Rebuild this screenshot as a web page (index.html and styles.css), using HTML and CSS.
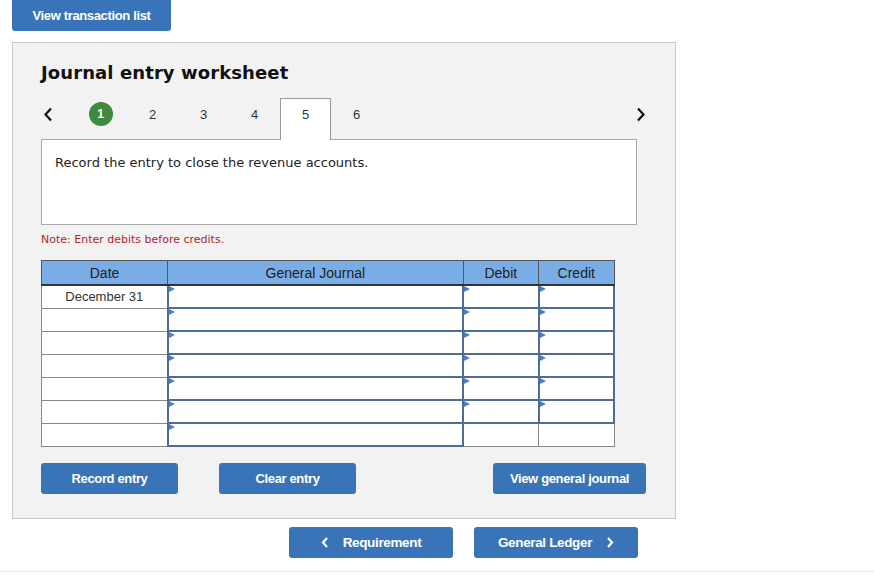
FILE: index.html
```html
<!DOCTYPE html>
<html lang="en">
<head>
    <meta charset="UTF-8">
    <title>Journal entry worksheet</title>
    <link rel="stylesheet" href="styles.css">
</head>
<body>

    <button class="btn top-btn">View transaction list</button>

    <div class="panel">
        <h1>Journal entry worksheet</h1>

        <div class="steps">
            <span class="arrow">
                <svg width="10" height="15" viewBox="0 0 10 15"><path d="M8 1.5 L2.5 7.5 L8 13.5" fill="none" stroke="#111" stroke-width="2.2"/></svg>
            </span>
            <div class="step-list">
                <span class="step"><span class="done">1</span></span>
                <span class="step">2</span>
                <span class="step">3</span>
                <span class="step">4</span>
                <span class="step active">5</span>
                <span class="step">6</span>
            </div>
            <span class="arrow next">
                <svg width="10" height="15" viewBox="0 0 10 15"><path d="M2 1.5 L7.5 7.5 L2 13.5" fill="none" stroke="#111" stroke-width="2.2"/></svg>
            </span>
        </div>

        <div class="question">Record the entry to close the revenue accounts.</div>

        <p class="note">Note: Enter debits before credits.</p>

        <table class="journal">
            <thead>
                <tr>
                    <th class="c-date">Date</th>
                    <th class="c-acct">General Journal</th>
                    <th class="c-amt">Debit</th>
                    <th class="c-amt">Credit</th>
                </tr>
            </thead>
            <tbody>
                <tr><td>December 31</td><td class="inp"></td><td class="inp"></td><td class="inp"></td></tr>
                <tr><td></td><td class="inp"></td><td class="inp"></td><td class="inp"></td></tr>
                <tr><td></td><td class="inp"></td><td class="inp"></td><td class="inp"></td></tr>
                <tr><td></td><td class="inp"></td><td class="inp"></td><td class="inp"></td></tr>
                <tr><td></td><td class="inp"></td><td class="inp"></td><td class="inp"></td></tr>
                <tr><td></td><td class="inp"></td><td class="inp"></td><td class="inp"></td></tr>
                <tr><td></td><td class="inp"></td><td></td><td></td></tr>
            </tbody>
        </table>

        <div class="actions">
            <button class="btn act">Record entry</button>
            <button class="btn act clear">Clear entry</button>
            <button class="btn act view">View general journal</button>
        </div>
    </div>

    <div class="pager">
        <button class="btn page">
            <svg class="chev" width="8" height="11" viewBox="0 0 8 11"><path d="M6 1 L2 5.5 L6 10" fill="none" stroke="#fff" stroke-width="2.2"/></svg>Requirement
        </button>
        <button class="btn page">General Ledger<svg class="chev right" width="8" height="11" viewBox="0 0 8 11"><path d="M2 1 L6 5.5 L2 10" fill="none" stroke="#fff" stroke-width="2.2"/></svg></button>
    </div>

    <div class="footer-line"></div>

</body>
</html>
```

FILE: styles.css
```css
body {
    margin: 0;
    background: #fff;
    font-family: 'DejaVu Sans', Verdana, sans-serif;
    color: #222;
}

.btn {
    background: #3a74b8;
    color: #fff;
    border: none;
    border-radius: 3px;
    font-family: 'Liberation Sans', Arial, sans-serif;
    font-weight: bold;
    font-size: 13px;
    letter-spacing: -0.35px;
    height: 31px;
    padding: 0;
    cursor: pointer;
}

.top-btn {
    display: block;
    margin-left: 12px;
    width: 159px;
    border-radius: 0 0 3px 3px;
}

.panel {
    margin: 11px 0 0 12px;
    background: #f2f2f2;
    border: 1px solid #c8c8c8;
    padding: 0 0 24px 28px;
    box-sizing: border-box;
    width: 664px;
}

h1 {
    font-size: 18px;
    font-weight: bold;
    margin: 19px 0 0 0;
    color: #111;
    letter-spacing: 0.1px;
}

.steps {
    display: flex;
    align-items: flex-end;
    margin-top: 15px;
    height: 41px;
    width: 605px;
    position: relative;
    z-index: 1;
}

.arrow {
    width: 35px;
    height: 41px;
    display: flex;
    align-items: flex-start;
    padding-top: 9px;
    box-sizing: border-box;
    padding-left: 2px;
}

.arrow.next {
    margin-left: auto;
    width: auto;
    padding-left: 0;
}

.step-list {
    display: flex;
}

.step {
    width: 51px;
    height: 41px;
    display: flex;
    align-items: flex-start;
    justify-content: center;
    padding-top: 9px;
    font-family: 'Liberation Sans', Arial, sans-serif;
    font-size: 13px;
    color: #333;
    box-sizing: border-box;
}

.step.active {
    background: #fff;
    border: 1px solid #999;
    border-bottom: none;
    height: 42px;
    margin-bottom: -1px;
    padding-top: 8px;
}

.done {
    width: 24px;
    height: 24px;
    margin-top: -5px;
    border-radius: 50%;
    background: #3f8a3e;
    color: #fff;
    font-weight: bold;
    font-size: 12px;
    display: flex;
    align-items: center;
    justify-content: center;
    margin-left: -2px;
}

.question {
    width: 596px;
    height: 86px;
    box-sizing: border-box;
    background: #fff;
    border: 1px solid #aaa;
    padding: 15px 13px;
    font-size: 13px;
    color: #222;
}

.note {
    color: #b3262b;
    font-size: 11px;
    margin: 8px 0 14px 0;
}

.journal {
    border-collapse: collapse;
    width: 574px;
    font-family: 'Liberation Sans', Arial, sans-serif;
    font-size: 13px;
}

.journal th {
    background: #7aade6;
    font-weight: normal;
    font-size: 14px;
    color: #1c1c1c;
    height: 23px;
    padding: 0;
    border: 1px solid #555;
    border-bottom: 2px solid #333;
}

.c-date { width: 126px; }
.c-acct { width: 298px; }
.c-amt { width: 75px; }

.journal td {
    height: 21px;
    padding: 0;
    background: #fff;
    border: 1px solid #888;
    text-align: center;
    color: #333;
}

.journal td.inp {
    border: 2px solid #4e6d95;
    position: relative;
}

.journal td.inp::before {
    content: "";
    position: absolute;
    left: 0;
    top: 0;
    border-top: 3.5px solid transparent;
    border-bottom: 3.5px solid transparent;
    border-left: 6px solid #4b7fc0;
}

.actions {
    display: flex;
    margin-top: 16px;
    width: 605px;
}

.act {
    width: 137px;
}

.clear {
    margin-left: 41px;
}

.view {
    margin-left: auto;
    width: 153px;
}

.pager {
    display: flex;
    gap: 21px;
    padding-left: 289px;
    margin-top: 8px;
}

.page {
    width: 164px;
    font-size: 13.5px;
}

.chev {
    margin-right: 14px;
    vertical-align: -1px;
}

.chev.right {
    margin: 0 0 0 14px;
}

.footer-line {
    margin-top: 13px;
    border-top: 1px solid #e8e8e8;
}
```
